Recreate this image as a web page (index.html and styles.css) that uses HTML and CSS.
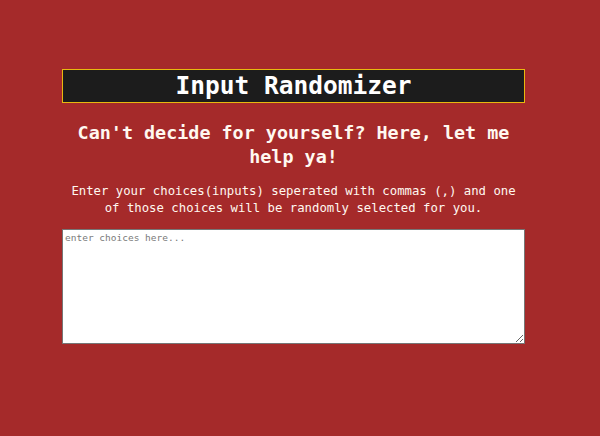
FILE: index.html
```html
<!DOCTYPE html>
<html>
<head>
<meta charset="utf-8">
<link rel="stylesheet" href="styles.css">
</head>
<body>
<main class="wrap">
  <h1 class="title">Input Randomizer</h1>
  <h2 class="lead">Can't decide for yourself? Here, let me help ya!</h2>
  <p class="info">Enter your choices(inputs) seperated with commas (,) and one of those choices will be randomly selected for you.</p>
  <textarea class="choices" placeholder="enter choices here..."></textarea>
</main>
</body>
</html>
```
FILE: styles.css
```css
html, body {
  margin: 0;
  padding: 0;
  background: #a52a2a;
  height: 100%;
}
.wrap {
  width: 463px;
  margin-left: 62px;
  padding-top: 69px;
  display: flex;
  flex-direction: column;
  font-family: "DejaVu Sans Mono", monospace;
  color: #fff8f0;
}
.title {
  margin: 0;
  border: 1px solid #e8b90f;
  background: #1c1c1c;
  color: #ffffff;
  font-size: 24.5px;
  line-height: 32px;
  text-align: center;
  font-weight: bold;
}
.lead {
  margin: 18px 0 0;
  font-size: 18.4px;
  line-height: 24px;
  text-align: center;
  font-weight: bold;
}
.info {
  margin: 14px 0 0;
  font-size: 12.3px;
  line-height: 17px;
  text-align: center;
}
.choices {
  margin: 12px 0 0;
  box-sizing: border-box;
  width: 463px;
  height: 115px;
  border: 1px solid #767676;
  padding: 2px;
  font-family: "DejaVu Sans Mono", monospace;
  font-size: 9.5px;
  background: #fff;
}
.choices::placeholder {
  color: #7a7a7a;
}
```
